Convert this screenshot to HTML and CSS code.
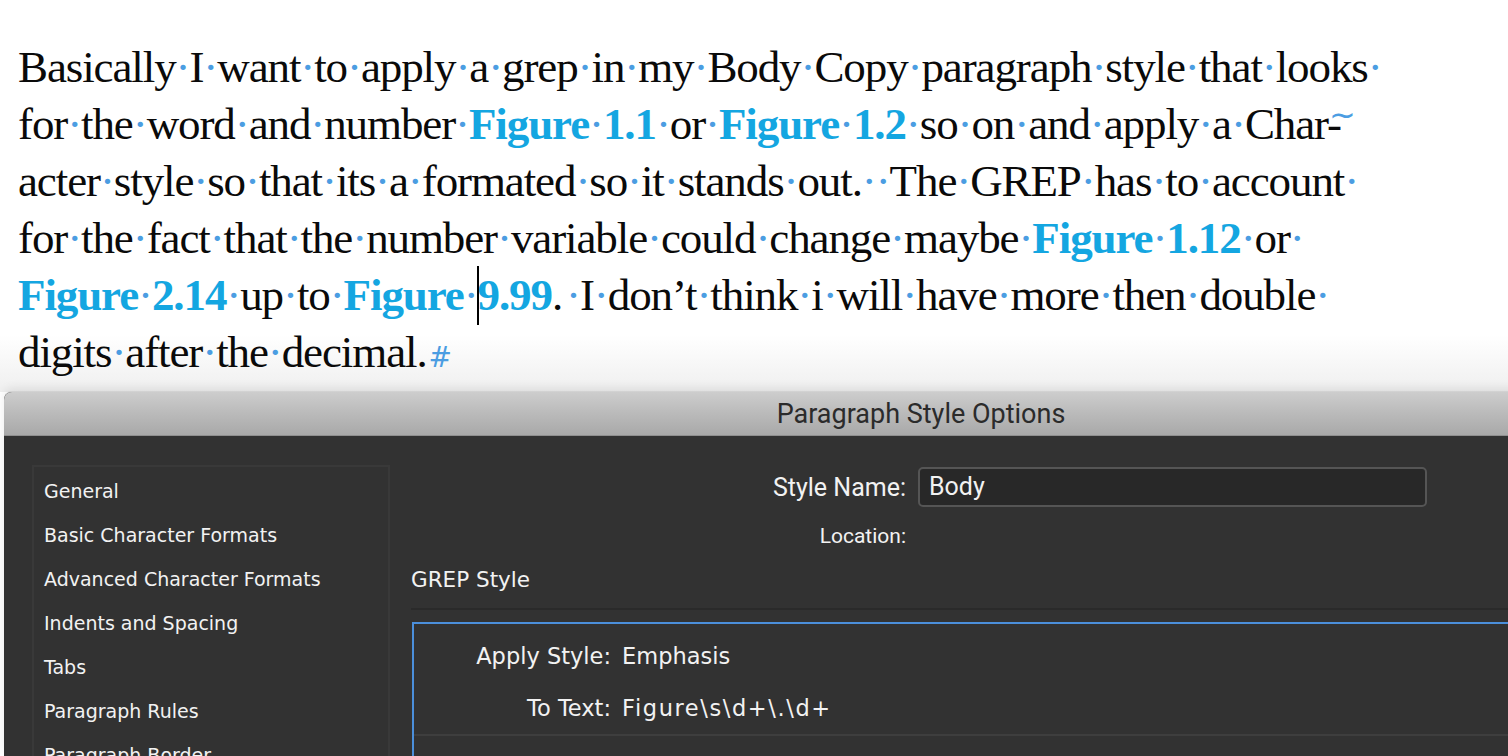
FILE: index.html
```html
<!DOCTYPE html>
<html>
<head>
<meta charset="utf-8">
<link rel="stylesheet" href="styles.css">
</head>
<body>
<div class="doc">
  <div class="line">Basically<span class="s">·</span>I<span class="s">·</span>want<span class="s">·</span>to<span class="s">·</span>apply<span class="s">·</span>a<span class="s">·</span>grep<span class="s">·</span>in<span class="s">·</span>my<span class="s">·</span>Body<span class="s">·</span>Copy<span class="s">·</span>paragraph<span class="s">·</span>style<span class="s">·</span>that<span class="s">·</span>looks<span class="s">·</span></div>
  <div class="line">for<span class="s">·</span>the<span class="s">·</span>word<span class="s">·</span>and<span class="s">·</span>number<span class="s">·</span><b class="fig">Figure<span class="s">·</span>1.1</b><span class="s">·</span>or<span class="s">·</span><b class="fig">Figure<span class="s">·</span>1.2</b><span class="s">·</span>so<span class="s">·</span>on<span class="s">·</span>and<span class="s">·</span>apply<span class="s">·</span>a<span class="s">·</span>Char<span class="hy">-<span class="tilde">~</span></span></div>
  <div class="line">acter<span class="s">·</span>style<span class="s">·</span>so<span class="s">·</span>that<span class="s">·</span>its<span class="s">·</span>a<span class="s">·</span>formated<span class="s">·</span>so<span class="s">·</span>it<span class="s">·</span>stands<span class="s">·</span>out.<span class="s">·</span><span class="s">·</span>The<span class="s">·</span>GREP<span class="s">·</span>has<span class="s">·</span>to<span class="s">·</span>account<span class="s">·</span></div>
  <div class="line">for<span class="s">·</span>the<span class="s">·</span>fact<span class="s">·</span>that<span class="s">·</span>the<span class="s">·</span>number<span class="s">·</span>variable<span class="s">·</span>could<span class="s">·</span>change<span class="s">·</span>maybe<span class="s">·</span><b class="fig">Figure<span class="s">·</span>1.12</b><span class="s">·</span>or<span class="s">·</span></div>
  <div class="line"><b class="fig">Figure<span class="s">·</span>2.14</b><span class="s">·</span>up<span class="s">·</span>to<span class="s">·</span><b class="fig">Figure<span class="s">·</span><span class="caret"></span>9.99</b>.<span class="s gap">·</span>I<span class="s">·</span>don’t<span class="s">·</span>think<span class="s">·</span>i<span class="s">·</span>will<span class="s">·</span>have<span class="s">·</span>more<span class="s">·</span>then<span class="s">·</span>double<span class="s">·</span></div>
  <div class="line">digits<span class="s">·</span>after<span class="s">·</span>the<span class="s">·</span>decimal.<span class="pil">#</span></div>
</div>

<div class="dialog">
  <div class="titlebar">Paragraph Style Options</div>
  <div class="dbody">
    <ul class="nav">
      <li>General</li>
      <li>Basic Character Formats</li>
      <li>Advanced Character Formats</li>
      <li>Indents and Spacing</li>
      <li>Tabs</li>
      <li>Paragraph Rules</li>
      <li>Paragraph Border</li>
    </ul>
    <div class="main">
      <div class="form">
        <label class="lbl">Style Name:</label>
        <div class="input">Body</div>
        <label class="lbl small">Location:</label>
        <div></div>
      </div>
      <div class="section">GREP Style</div>
      <div class="grepbox">
        <div class="grow">
          <span class="glbl">Apply Style:</span><span class="gval">Emphasis</span>
          <span class="glbl">To Text:</span><span class="gval regex">Figure\s\d+\.\d+</span>
        </div>
      </div>
    </div>
  </div>
</div>
</body>
</html>
```

FILE: styles.css
```css
html, body {
  margin: 0;
  padding: 0;
  overflow: hidden;
  background: #ffffff;
}
body {
  width: 1508px;
  height: 756px;
}
.doc {
  height: 353px;
  padding: 39px 0 0 18px;
  background: linear-gradient(to bottom, #ffffff 0, #ffffff 335px, #efefef 392px);
  font-family: "Liberation Serif", serif;
  font-size: 45px;
  letter-spacing: -1.1px;
  line-height: 57px;
  color: #0a0a0a;
}
.line {
  white-space: nowrap;
}
.s {
  color: #4b9de2;
  font-weight: normal;
}
.gap {
  margin-left: 4px;
}
.fig {
  color: #14a6e1;
  font-weight: bold;
}
.hy {
  position: relative;
}
.tilde {
  position: absolute;
  left: 2px;
  top: -12px;
  color: #4b9de2;
  font-size: 32px;
  letter-spacing: 0;
  font-family: "DejaVu Sans", sans-serif;
}
.caret {
  position: relative;
  display: inline-block;
  width: 0;
}
.caret::before {
  content: "";
  position: absolute;
  left: -1px;
  top: -44px;
  width: 2px;
  height: 59px;
  background: #000;
}
.pil {
  color: #4b9de2;
  font-family: "DejaVu Sans", sans-serif;
  font-size: 28px;
  letter-spacing: 0;
  margin-left: 2px;
}

.dialog {
  margin-left: 4px;
  width: 1834px;
  height: 364px;
  border-radius: 8px 8px 0 0;
  overflow: hidden;
  background: #323232;
  box-shadow: 0 -1px 0 #d2d2d2, 0 -4px 10px rgba(0,0,0,0.08);
}
.titlebar {
  height: 44px;
  border-bottom: 1px solid #8f8f8f;
  background: linear-gradient(to bottom, #cdcdcd 0, #bababa 50%, #a9a9a9 100%);
  display: flex;
  align-items: center;
  justify-content: center;
  font-family: Roboto, "Liberation Sans", sans-serif;
  font-size: 27px;
  color: #2b2b2b;
  padding-top: 1px;
  box-sizing: border-box;
}
.dbody {
  display: flex;
  padding: 29px 0 0 28px;
  font-family: "DejaVu Sans", sans-serif;
  color: #f2f2f2;
}
.nav {
  list-style: none;
  margin: 0;
  padding: 2px 0 0 10px;
  width: 358px;
  height: 320px;
  box-sizing: border-box;
  border: 2px solid #393939;
  border-bottom: none;
  font-size: 19px;
  line-height: 44px;
}
.main {
  margin-left: 21px;
  flex: 1;
  display: flex;
  flex-direction: column;
}
.form {
  display: grid;
  grid-template-columns: 495px 509px;
  column-gap: 12px;
  row-gap: 17px;
  align-items: center;
  margin-top: 2px;
}
.lbl {
  text-align: right;
  font-family: Roboto, "Liberation Sans", sans-serif;
  font-size: 25px;
}
.lbl.small {
  font-size: 21px;
  line-height: 24px;
}
.input {
  height: 40px;
  box-sizing: border-box;
  border: 2px solid #555;
  border-radius: 5px;
  background: #282828;
  font-family: Roboto, "Liberation Sans", sans-serif;
  font-size: 25px;
  line-height: 36px;
  padding-left: 9px;
}
.section {
  margin-top: 19px;
  font-size: 21.5px;
  line-height: 25px;
  padding-bottom: 16px;
  border-bottom: 2px solid #2a2a2a;
}
.grepbox {
  margin-top: 12px;
  margin-left: 1px;
  border: 2px solid #4b8fdb;
  border-right: none;
  border-bottom: none;
  flex: 1;
}
.grow {
  display: grid;
  grid-template-columns: 197px auto;
  column-gap: 11px;
  row-gap: 26px;
  padding: 19px 0 13px 0;
  border-bottom: 2px solid #3e3e3e;
  font-size: 22.5px;
  line-height: 26px;
}
.glbl {
  text-align: right;
}
.regex {
  letter-spacing: 1.6px;
}
```
